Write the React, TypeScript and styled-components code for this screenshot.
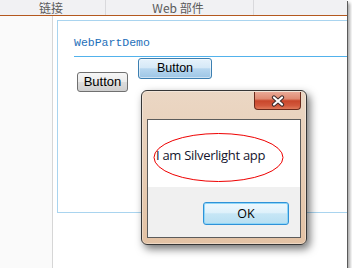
import React from "react";
import styled, { createGlobalStyle } from "styled-components";

const Global = createGlobalStyle`
  html, body { margin: 0; padding: 0; background: #ffffff; }
  body { font-family: "Liberation Sans", Arial, sans-serif; }
  * { box-sizing: border-box; }
`;

const Frame = styled.div`
  position: relative;
  width: 347px;
  height: 268px;
  overflow: hidden;
  background: #ffffff;
  box-shadow: 1px 1px 0 #5a5a5a, 3px 3px 3px rgba(0, 0, 0, 0.35);
  display: flex;
  flex-direction: column;
`;

const TabBar = styled.div`
  display: flex;
  height: 16px;
  background: #f1f1f3;
  border-bottom: 1px solid #b4581e;
  flex: none;
`;

const Tab = styled.div<{ $w: number }>`
  width: ${(p) => p.$w}px;
  border-right: 1px solid #d9d9dc;
  text-align: center;
  font-family: "Noto Sans CJK SC", "Liberation Sans", sans-serif;
  font-size: 12px;
  line-height: 15px;
  color: #5a5a5a;
  padding-right: 3px;
`;

const Body = styled.div`
  display: flex;
  flex: 1;
  min-height: 0;
`;

const Sidebar = styled.div`
  width: 53px;
  background: #fafafa;
  border-right: 1px solid #d6d6d6;
  flex: none;
`;

const Main = styled.div`
  flex: 1;
  padding: 4px 0 0 4px;
  overflow: hidden;
`;

const WebPart = styled.div`
  width: 320px;
  height: 193px;
  border: 1px solid #a9d4ef;
  padding-left: 16px;
`;

const PartTitle = styled.div`
  padding-top: 15px;
  padding-bottom: 6px;
  border-bottom: 1px solid #52b2ec;
  font-family: "Liberation Mono", "DejaVu Sans Mono", monospace;
  font-size: 11.5px;
  line-height: 14px;
  color: #1e6fba;
`;

const ButtonRow = styled.div`
  display: flex;
  align-items: flex-start;
  gap: 10px;
  padding-left: 3px;
`;

const ClassicButton = styled.div`
  margin-top: 15px;
  width: 51px;
  height: 20px;
  border: 1px solid #707070;
  border-radius: 3px;
  background: linear-gradient(#f6f6f6 0%, #ebebeb 50%, #dddddd 51%, #cfcfcf 100%);
  font-size: 13px;
  line-height: 18px;
  text-align: center;
  color: #000;
`;

const AquaButton = styled.div`
  margin-top: 1px;
  width: 74px;
  height: 21px;
  border: 1px solid #3c7fb1;
  border-radius: 3px;
  background: linear-gradient(#e6f2fb 0%, #d6e9f7 45%, #b6d6ef 52%, #9dc6e6 100%);
  box-shadow: inset 0 0 0 1px rgba(255, 255, 255, 0.5);
  font-size: 12.5px;
  line-height: 18px;
  text-align: center;
  color: #000;
`;

const Dialog = styled.div`
  position: absolute;
  left: 141px;
  top: 90px;
  width: 166px;
  height: 155px;
  border: 1px solid #363636;
  border-radius: 6px;
  background: linear-gradient(#ebd7c4 0%, #e8cfb8 40%, #e3c2a4 100%);
  box-shadow: inset 0 0 0 1px rgba(255, 255, 255, 0.35), 3px 4px 9px rgba(0, 0, 0, 0.55);
  padding: 0 5px 6px 5px;
  display: flex;
  flex-direction: column;
`;

const TitleBar = styled.div`
  height: 28px;
  display: flex;
  justify-content: flex-end;
  align-items: flex-start;
  flex: none;
`;

const CloseButton = styled.div`
  margin-top: 1px;
  width: 47px;
  height: 18px;
  border: 1px solid #6b2a1c;
  border-top: none;
  border-radius: 0 0 4px 4px;
  background: linear-gradient(#e9a996 0%, #df8a72 40%, #c9462b 52%, #d2583c 80%, #e07a5a 100%);
  display: flex;
  align-items: center;
  justify-content: center;
`;

const Client = styled.div`
  flex: 1;
  border: 1px solid #5c5c5c;
  display: flex;
  flex-direction: column;
  background: #f0f0f0;
`;

const Message = styled.div`
  position: relative;
  height: 67px;
  background: #ffffff;
  display: flex;
  align-items: center;
  padding: 3px 0 0 8px;
  font-family: "Open Sans", "Liberation Sans", sans-serif;
  font-size: 13px;
  color: #15152e;
  letter-spacing: -0.3px;
`;

const Ellipse = styled.svg`
  position: absolute;
  left: 5px;
  top: 13px;
`;

const Footer = styled.div`
  flex: 1;
  display: flex;
  justify-content: flex-end;
  align-items: flex-start;
  padding: 15px 11px 0 0;
`;

const OkButton = styled.div`
  width: 86px;
  height: 23px;
  border: 1px solid #2f92d8;
  border-radius: 3px;
  background: linear-gradient(#eef8fe 0%, #dff1fb 45%, #c6e6f6 52%, #b8dff2 100%);
  box-shadow: inset 0 0 0 1px #8fd6f7;
  font-family: "Open Sans", "Liberation Sans", sans-serif;
  font-size: 12.5px;
  line-height: 21px;
  text-align: center;
  color: #000;
`;

export default function App() {
  return (
    <>
      <Global />
      <Frame>
        <TabBar>
          <Tab $w={106}>链接</Tab>
          <Tab $w={148}>Web 部件</Tab>
        </TabBar>
        <Body>
          <Sidebar />
          <Main>
            <WebPart>
              <PartTitle>WebPartDemo</PartTitle>
              <ButtonRow>
                <ClassicButton>Button</ClassicButton>
                <AquaButton>Button</AquaButton>
              </ButtonRow>
            </WebPart>
          </Main>
        </Body>
        <Dialog>
          <TitleBar>
            <CloseButton>
              <svg width="14" height="12" viewBox="0 0 14 12">
                <path d="M3 2.5 L11 9.5 M11 2.5 L3 9.5" stroke="#3d2b2b" strokeWidth="4.2" strokeLinecap="round" />
                <path d="M3 2.5 L11 9.5 M11 2.5 L3 9.5" stroke="#ffffff" strokeWidth="2.2" strokeLinecap="round" />
              </svg>
            </CloseButton>
          </TitleBar>
          <Client>
            <Message>
              I am Silverlight app
              <Ellipse width="131" height="50" viewBox="0 0 131 50">
                <ellipse cx="65.5" cy="24.5" rx="64.5" ry="24" fill="none" stroke="#ee0000" strokeWidth="1" />
              </Ellipse>
            </Message>
            <Footer>
              <OkButton>OK</OkButton>
            </Footer>
          </Client>
        </Dialog>
      </Frame>
    </>
  );
}
